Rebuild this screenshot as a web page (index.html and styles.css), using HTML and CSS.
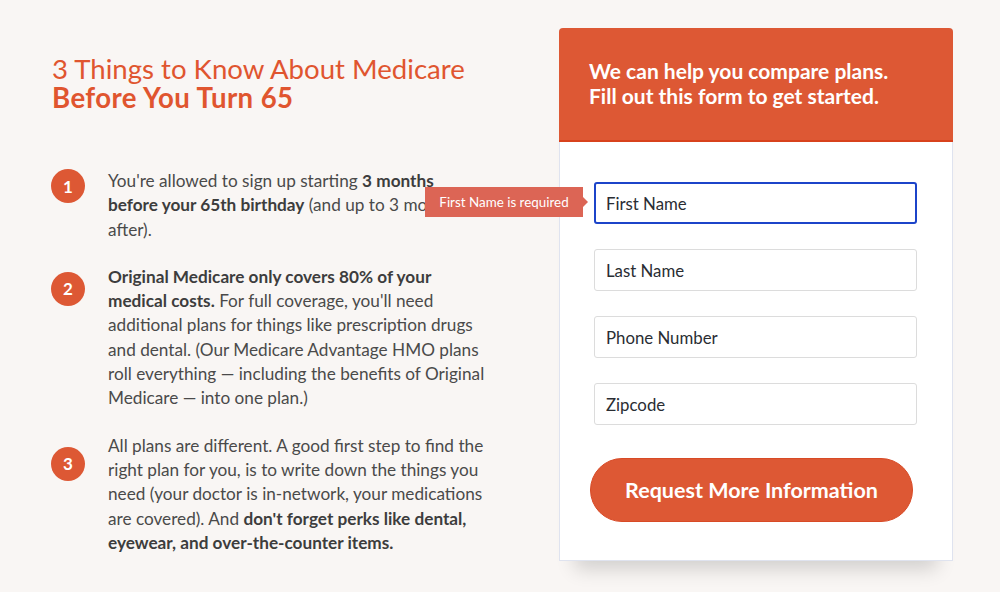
FILE: index.html
```html
<!DOCTYPE html>
<html>
<head>
<meta charset="utf-8">
<link rel="stylesheet" href="styles.css">
</head>
<body>
<div class="page">
  <section class="info">
    <h1 class="title"><span class="title-light">3 Things to Know About Medicare</span><span class="title-bold">Before You Turn 65</span></h1>
    <ol class="steps">
      <li class="step step-1">
        <span class="num">1</span>
        <p class="step-text">You're allowed to sign up starting <b>3 months</b><br><b>before your 65th birthday</b> (and up to 3 months<br>after).</p>
      </li>
      <li class="step step-2">
        <span class="num">2</span>
        <p class="step-text"><b>Original Medicare only covers 80% of your</b><br><b>medical costs.</b> For full coverage, you'll need<br>additional plans for things like prescription drugs<br>and dental. (Our Medicare Advantage HMO plans<br>roll everything — including the benefits of Original<br>Medicare — into one plan.)</p>
      </li>
      <li class="step step-3">
        <span class="num">3</span>
        <p class="step-text">All plans are different. A good first step to find the<br>right plan for you, is to write down the things you<br>need (your doctor is in-network, your medications<br>are covered). And <b>don't forget perks like dental,</b><br><b>eyewear, and over-the-counter items.</b></p>
      </li>
    </ol>
  </section>
  <aside class="card">
    <div class="card-head">We can help you compare plans.<br>Fill out this form to get started.</div>
    <form class="card-body">
      <div class="field">
        <input class="input input-error" type="text" placeholder="First Name">
        <div class="tip">First Name is required</div>
      </div>
      <div class="field"><input class="input" type="text" placeholder="Last Name"></div>
      <div class="field"><input class="input" type="text" placeholder="Phone Number"></div>
      <div class="field"><input class="input" type="text" placeholder="Zipcode"></div>
      <button class="btn" type="button">Request More Information</button>
    </form>
  </aside>
</div>
</body>
</html>
```
FILE: styles.css
```css
* { box-sizing: border-box; }
html, body { margin: 0; padding: 0; }
body {
  background: #f9f6f4;
  font-family: "Lato", "Liberation Sans", sans-serif;
  color: #4a4a4a;
  width: 1000px;
  height: 592px;
  overflow: hidden;
}
.page {
  display: flex;
  align-items: flex-start;
}
.info {
  flex: none;
  width: 512px;
  padding-left: 52px;
  padding-top: 54px;
}
.title {
  margin: 0;
  color: #e0552f;
  font-size: 27.6px;
  line-height: 29px;
  font-weight: 400;
}
.title span { display: block; white-space: nowrap; }
.title-bold { font-weight: 700; letter-spacing: 0.4px; }
.steps {
  list-style: none;
  margin: 57px 0 0;
  padding: 0;
}
.step {
  display: flex;
  align-items: flex-start;
}
.step + .step { margin-top: 23px; }
.num {
  flex: none;
  width: 34px;
  height: 34px;
  border-radius: 50%;
  background: #dd5834;
  color: #fff;
  font-weight: 700;
  font-size: 17px;
  display: flex;
  align-items: center;
  justify-content: center;
  margin-left: -1px;
  margin-right: 23px;
}
.step-1 .num { margin-top: 0; }
.step-2 .num { margin-top: 7px; }
.step-3 .num { margin-top: 13px; }
.step-text {
  margin: 0;
  white-space: nowrap;
  font-size: 17.2px;
  line-height: 24.3px;
}
.step-text b { font-weight: 700; color: #3d3d3d; }

.card {
  flex: none;
  margin-left: 47px;
  margin-top: 28px;
  width: 394px;
  background: #fff;
  border: 1px solid #dfe3ef;
  border-top: none;
  border-radius: 4px 4px 0 0;
  box-shadow: 0 24px 18px -16px rgba(0,0,0,0.16);
}
.card-head {
  background: #dd5834;
  color: #fff;
  font-weight: 700;
  font-size: 21px;
  line-height: 25px;
  padding: 30px 30px 30px;
  height: 114px;
  border-radius: 4px 4px 0 0;
  border-bottom: 2px solid #d8421c;
  margin: 0 -1px;
  white-space: nowrap;
}
.card-body {
  margin: 0;
  padding: 40px 35px 38px 34px;
  display: flex;
  flex-direction: column;
  gap: 25px;
}
.field { position: relative; }
.input {
  display: block;
  width: 323px;
  height: 42px;
  border: 1px solid #dcdcdc;
  border-radius: 3px;
  padding: 0 11px;
  font-family: inherit;
  font-size: 16.8px;
  color: #222;
  background: #fff;
  outline: none;
}
.input::placeholder { color: #2a2d33; opacity: 1; }
.input-error { border: 2px solid #1c44c9; padding-left: 10px; }
.tip {
  position: absolute;
  right: calc(100% + 11px);
  top: 5px;
  height: 30px;
  width: 158px;
  background: #dc6555;
  color: #fff;
  font-size: 13.4px;
  display: flex;
  align-items: center;
  justify-content: center;
  white-space: nowrap;
}
.tip::after {
  content: "";
  position: absolute;
  left: 100%;
  top: 50%;
  margin-top: -5px;
  border-style: solid;
  border-width: 5px 0 5px 5px;
  border-color: transparent transparent transparent #dc6555;
}
.btn {
  margin-top: 8px;
  margin-left: -4px;
  width: 323px;
  height: 64px;
  border-radius: 32px;
  border: 1px solid #d84a26;
  background: #dd5834;
  color: #fff;
  font-family: inherit;
  font-weight: 700;
  font-size: 21.5px;
  cursor: pointer;
}
```
